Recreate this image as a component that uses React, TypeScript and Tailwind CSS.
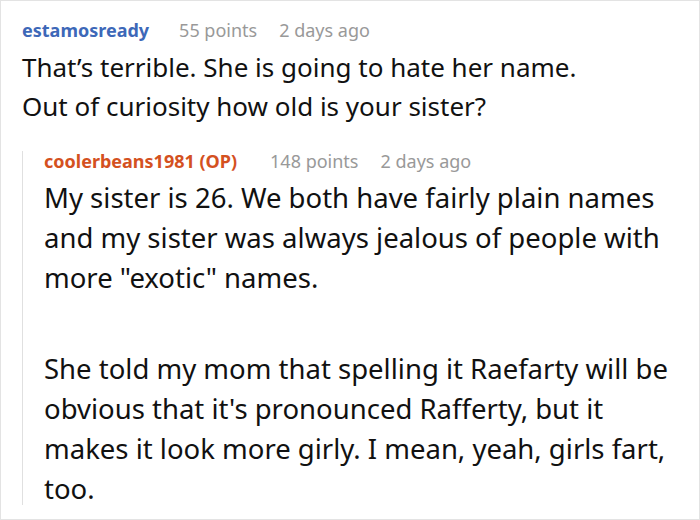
import React from "react";

export default function App() {
  return (
    <div
      className="w-[700px] h-[520px] bg-white border border-[#e3e3e3] overflow-hidden pl-[21px] pt-[19px] text-[#111]"
      style={{ fontFamily: '"Noto Sans", "Open Sans", sans-serif' }}
    >
      <div className="flex items-baseline h-[20px] leading-[20px]">
        <span className="text-[18px] font-bold text-[#3d68b8]">estamosready</span>
        <span className="ml-[30px] text-[18px] text-[#999]">55 points</span>
        <span className="ml-[22px] text-[18px] text-[#999]">2 days ago</span>
      </div>
      <div className="text-[26px] leading-[39px] mt-[8px]">
        <p>That’s terrible. She is going to hate her name.</p>
        <p>Out of curiosity how old is your sister?</p>
      </div>
      <div className="mt-[25px] border-l border-[#e0e0e0] pl-[21px] h-[354px]">
        <div className="flex items-baseline h-[20px] leading-[20px]">
          <span className="text-[18px] font-bold text-[#d4511f]">coolerbeans1981 (OP)</span>
          <span className="ml-[33px] text-[18px] text-[#999]">148 points</span>
          <span className="ml-[22px] text-[18px] text-[#999]">2 days ago</span>
        </div>
        <div className="text-[27.5px] leading-[40px] mt-[7px] pr-[10px]">
          <p>My sister is 26. We both have fairly plain names and my sister was always jealous of people with more "exotic" names.</p>
          <p className="mt-[51px]">She told my mom that spelling it Raefarty will be obvious that it's pronounced Rafferty, but it makes it look more girly. I mean, yeah, girls fart, too.</p>
        </div>
      </div>
    </div>
  );
}
